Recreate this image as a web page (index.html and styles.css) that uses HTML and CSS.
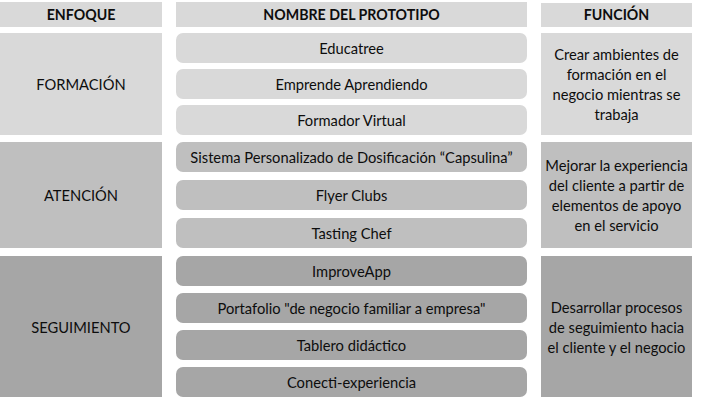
FILE: index.html
```html
<!DOCTYPE html>
<html lang="es">
<head>
<meta charset="utf-8">
<title>Prototipos</title>
<link rel="stylesheet" href="styles.css">
</head>
<body>
<div class="table">
  <div class="sec head">
    <div class="cell">ENFOQUE</div>
    <div class="cell">NOMBRE DEL PROTOTIPO</div>
    <div class="cell fn-head">FUNCIÓN</div>
  </div>
  <div class="sec s1">
    <div class="cell">FORMACIÓN</div>
    <div class="list">
      <div class="pill">Educatree</div>
      <div class="pill">Emprende Aprendiendo</div>
      <div class="pill">Formador Virtual</div>
    </div>
    <div class="cell fn">Crear ambientes de<br>formación en el<br>negocio mientras se<br>trabaja</div>
  </div>
  <div class="sec s2">
    <div class="cell">ATENCIÓN</div>
    <div class="list">
      <div class="pill">Sistema Personalizado de Dosificación “Capsulina”</div>
      <div class="pill">Flyer Clubs</div>
      <div class="pill">Tasting Chef</div>
    </div>
    <div class="cell fn">Mejorar la experiencia<br>del cliente a partir de<br>elementos de apoyo<br>en el servicio</div>
  </div>
  <div class="sec s3">
    <div class="cell">SEGUIMIENTO</div>
    <div class="list">
      <div class="pill">ImproveApp</div>
      <div class="pill">Portafolio "de negocio familiar a empresa"</div>
      <div class="pill">Tablero didáctico</div>
      <div class="pill">Conecti-experiencia</div>
    </div>
    <div class="cell fn">Desarrollar procesos<br>de seguimiento hacia<br>el cliente y el negocio</div>
  </div>
</div>
</body>
</html>
```

FILE: styles.css
```css
html, body {
  margin: 0;
  padding: 0;
  background: #ffffff;
}
body {
  font-family: Lato, "Open Sans", sans-serif;
  font-size: 14.7px;
  color: #0d0d0d;
}
.table {
  width: 706px;
  padding-top: 2px;
  display: flex;
  flex-direction: column;
}
.sec {
  display: grid;
  grid-template-columns: 162px 351px 151px;
  column-gap: 14px;
}
.cell {
  display: flex;
  align-items: center;
  justify-content: center;
  text-align: center;
  line-height: 20px;
  white-space: nowrap;
}
.head {
  height: 25px;
  font-weight: 700;
  font-size: 14.2px;
}
.head .cell {
  background: #d9d9d9;
}
.head .fn-head {
  margin-top: 1px;
}
.s1 { margin-top: 6px; height: 102px; }
.s2 { margin-top: 7px; height: 106px; }
.s3 { margin-top: 8px; height: 141px; }
.list {
  display: flex;
  flex-direction: column;
  justify-content: space-between;
}
.pill {
  height: 30px;
  border-radius: 7px;
  display: flex;
  align-items: center;
  justify-content: center;
  white-space: nowrap;
}
.s1 .cell, .s1 .pill { background: #d9d9d9; }
.s2 .cell, .s2 .pill { background: #bfbfbf; }
.s3 .cell, .s3 .pill { background: #a6a6a6; }
```
